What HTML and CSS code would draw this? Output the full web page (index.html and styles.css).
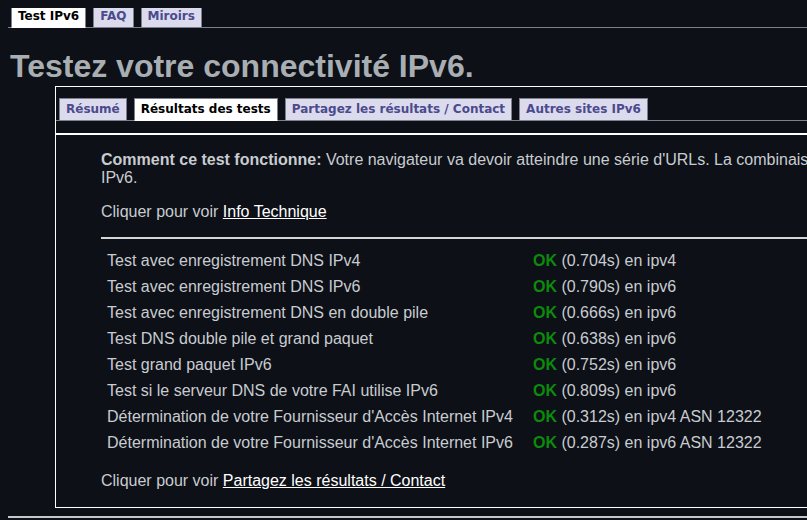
FILE: index.html
```html
<!DOCTYPE html>
<html lang="fr">
<head>
    <meta charset="UTF-8">
    <title>Testez votre connectivité IPv6.</title>
    <link rel="stylesheet" href="styles.css">
</head>
<body>

<ul class="tabs top-tabs">
    <li class="active">Test IPv6</li>
    <li>FAQ</li>
    <li>Miroirs</li>
</ul>

<h1>Testez votre connectivité IPv6.</h1>

<div class="box">
    <ul class="tabs inner-tabs">
        <li>Résumé</li>
        <li class="active">Résultats des tests</li>
        <li>Partagez les résultats / Contact</li>
        <li>Autres sites IPv6</li>
    </ul>

    <div class="content">
        <p class="intro"><b>Comment ce test fonctionne:</b> Votre navigateur va devoir atteindre une série d'URLs. La combinaison des succès et des échecs nous indique votre état de préparation à<br>IPv6.</p>

        <p>Cliquer pour voir <a href="#">Info Technique</a></p>

        <hr>

        <table class="results">
            <tr><td>Test avec enregistrement DNS IPv4</td><td><span class="ok">OK</span> (0.704s) en ipv4</td></tr>
            <tr><td>Test avec enregistrement DNS IPv6</td><td><span class="ok">OK</span> (0.790s) en ipv6</td></tr>
            <tr><td>Test avec enregistrement DNS en double pile</td><td><span class="ok">OK</span> (0.666s) en ipv6</td></tr>
            <tr><td>Test DNS double pile et grand paquet</td><td><span class="ok">OK</span> (0.638s) en ipv6</td></tr>
            <tr><td>Test grand paquet IPv6</td><td><span class="ok">OK</span> (0.752s) en ipv6</td></tr>
            <tr><td>Test si le serveur DNS de votre FAI utilise IPv6</td><td><span class="ok">OK</span> (0.809s) en ipv6</td></tr>
            <tr><td>Détermination de votre Fournisseur d'Accès Internet IPv4</td><td><span class="ok">OK</span> (0.312s) en ipv4 ASN 12322</td></tr>
            <tr><td>Détermination de votre Fournisseur d'Accès Internet IPv6</td><td><span class="ok">OK</span> (0.287s) en ipv6 ASN 12322</td></tr>
        </table>

        <p class="share">Cliquer pour voir <a href="#">Partagez les résultats / Contact</a></p>
    </div>
</div>

<hr class="footer-line">

</body>
</html>
```

FILE: styles.css
```css
html {
    background-color: #0d1017;
}

body {
    margin: 8px;
    background-color: #0d1017;
    color: #c8ccd0;
    font-family: "Liberation Sans", Arial, sans-serif;
    font-size: 16px;
    width: 1000px;
}

/* tab strips */
.tabs {
    list-style: none;
    margin: 0;
    padding: 0;
    display: flex;
    gap: 7px;
    border-bottom: 1px solid #7c7f8c;
}

.tabs li {
    font-family: "DejaVu Sans", Verdana, sans-serif;
    font-weight: bold;
    font-size: 12px;
    line-height: 21px;
    padding: 0 6px;
    margin-bottom: -1px;
    background-color: #dcdbee;
    color: #4b4a8c;
    border: 1px solid #7c7f8c;
}

.tabs li.active {
    background-color: #ffffff;
    color: #000000;
    border-bottom-color: #ffffff;
}

.top-tabs {
    padding-left: 3px;
    margin-top: -3px;
}

h1 {
    font-size: 32px;
    color: #a9aeb3;
    margin: 20px 0 2px 2px;
    line-height: 36px;
}

.box {
    margin-left: 47px;
    border: 1px solid #ffffff;
    padding-top: 11px;
    height: 409px;
}

.inner-tabs {
    padding-left: 3px;
}

.content {
    border-top: 2px solid #ffffff;
    margin-top: 12px;
    padding: 16px 0 0 45px;
}

.content p {
    margin: 0 0 16px 0;
    line-height: 18px;
}

.content p.intro {
    white-space: nowrap;
}

a {
    color: #ffffff;
}

hr {
    border: none;
    border-top: 2px solid #d6d6d6;
    margin: 16px 0 9px 0;
}

.results {
    border-spacing: 0;
    margin-bottom: 16px;
}

.results td {
    padding: 4px 6px 4px 6px;
    line-height: 18px;
}

.results td:first-child {
    width: 414px;
}

.ok {
    color: #0b8a0b;
    font-weight: bold;
}

.footer-line {
    margin: 8px 0 0 0;
    border-top: 2px solid #c8c8c8;
}
```
